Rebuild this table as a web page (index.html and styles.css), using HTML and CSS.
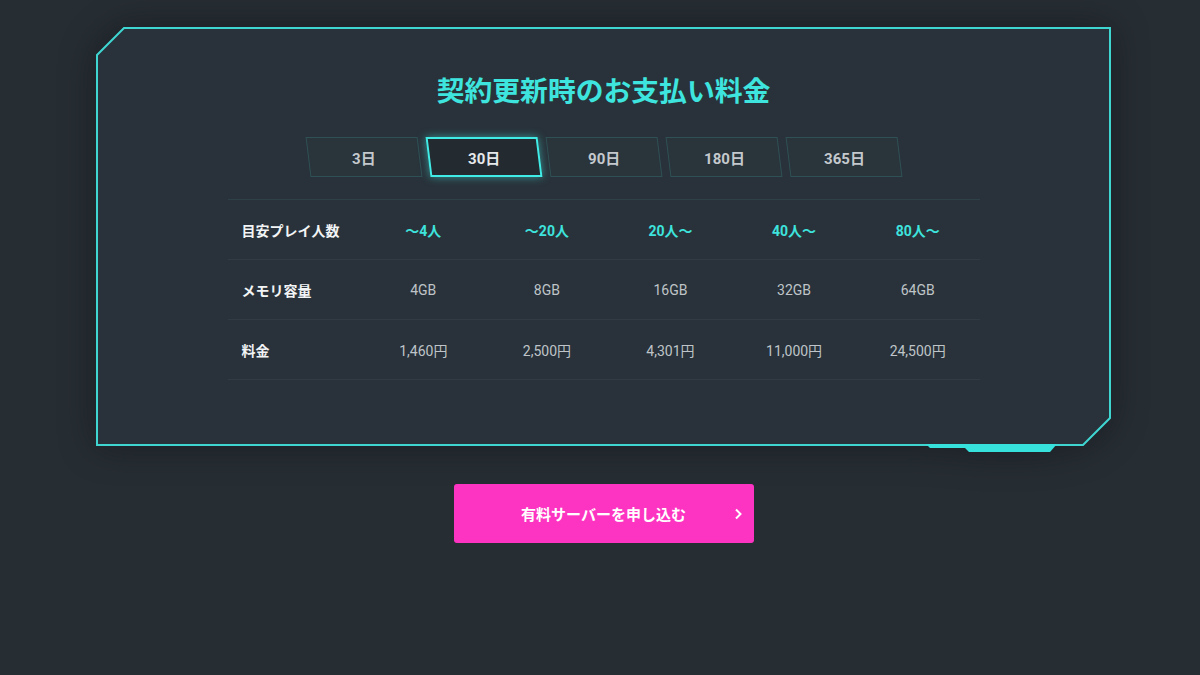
FILE: index.html
```html
<!DOCTYPE html>
<html lang="ja">

<head>
    <meta charset="UTF-8">
    <meta name="viewport" content="width=device-width, initial-scale=1.0">
    <title>料金プラン</title>
    <link rel="stylesheet" href="styles.css">
</head>

<body>
    <div class="section">
        <div class="panel">
            <!-- 枠線（角の切り欠きと下のタブ） -->
            <svg class="frame" width="1015" height="419" viewBox="0 0 1015 419">
                <polygon class="frame_fill" points="1,28 28,1 1014,1 1014,391 987,418 1,418" />
                <polygon class="frame_tab" points="830,417 961,417 954,425 873,425 869,421 834,421" />
            </svg>

            <div class="inner">
                <h2 class="title">契約更新時のお支払い料金</h2>

                <ul class="tabs">
                    <li class="tab"><span>3日</span></li>
                    <li class="tab active"><span>30日</span></li>
                    <li class="tab"><span>90日</span></li>
                    <li class="tab"><span>180日</span></li>
                    <li class="tab"><span>365日</span></li>
                </ul>

                <table class="price">
                    <colgroup>
                        <col class="col_label">
                        <col><col><col><col><col>
                    </colgroup>
                    <tr class="players">
                        <th>目安プレイ人数</th>
                        <td>～4人</td>
                        <td>～20人</td>
                        <td>20人～</td>
                        <td>40人～</td>
                        <td>80人～</td>
                    </tr>
                    <tr>
                        <th>メモリ容量</th>
                        <td>4GB</td>
                        <td>8GB</td>
                        <td>16GB</td>
                        <td>32GB</td>
                        <td>64GB</td>
                    </tr>
                    <tr>
                        <th>料金</th>
                        <td>1,460円</td>
                        <td>2,500円</td>
                        <td>4,301円</td>
                        <td>11,000円</td>
                        <td>24,500円</td>
                    </tr>
                </table>
            </div>
        </div>

        <a class="btn" href="#">
            有料サーバーを申し込む
            <svg class="arrow" width="8" height="12" viewBox="0 0 8 12">
                <path d="M2 1.5 L6.5 6 L2 10.5" />
            </svg>
        </a>
    </div>
</body>

</html>
```

FILE: styles.css
```css
body {
    margin: 0;
    padding: 0;
    background-color: #262d33;
    font-family: Roboto, "Noto Sans CJK JP", sans-serif;
    color: #fff;
}

.section {
    width: 1015px;
    margin: 0 auto;
    padding: 27px 0 0 7px;
}

.panel {
    position: relative;
    width: 1015px;
    height: 419px;
}

.frame {
    position: absolute;
    top: 0;
    left: 0;
    overflow: visible;
    filter: drop-shadow(0 0 18px rgba(0, 0, 0, 0.35));
}

.frame_fill {
    fill: #29323a;
    stroke: #3fd6d2;
    stroke-width: 2;
}

.frame_tab {
    fill: #37e2dd;
}

.inner {
    position: relative;
    padding: 0 131px;
    display: flex;
    flex-direction: column;
    align-items: center;
}

.title {
    margin: 46px 0 0;
    font-size: 27.8px;
    line-height: 38px;
    font-weight: 700;
    color: #3ee5df;
}

.tabs {
    list-style: none;
    margin: 26px 0 0;
    padding: 0;
    display: flex;
    gap: 8px;
}

.tab {
    width: 112px;
    height: 40px;
    box-sizing: border-box;
    border: 1px solid #2f5156;
    background-color: #29343b;
    transform: skewX(7deg);
    display: flex;
    align-items: center;
    justify-content: center;
    font-size: 15px;
    font-weight: 700;
    color: #c4c9cd;
}

.tab span {
    transform: skewX(-7deg);
}

.tab.active {
    border: 2px solid #42ece6;
    background-color: #232b31;
    color: #e6e9eb;
    box-shadow: 0 0 8px rgba(62, 227, 221, 0.55);
}

.price {
    width: 752px;
    margin-top: 22px;
    table-layout: fixed;
    border-collapse: collapse;
    border-top: 1px solid #2f4148;
    font-size: 14px;
}

.col_label {
    width: 134px;
}

.price tr {
    height: 60px;
    border-bottom: 1px solid #303b43;
}

.price th {
    padding: 0 0 0 14px;
    text-align: left;
    font-weight: 700;
    color: #f2f4f5;
}

.price td {
    text-align: center;
    color: #bfc4c8;
}

.players td {
    color: #3ee3dd;
    font-weight: 700;
}

.btn {
    position: relative;
    display: flex;
    align-items: center;
    justify-content: center;
    width: 300px;
    height: 59px;
    margin: 38px auto 0;
    background-color: #fd33c1;
    border-radius: 3px;
    color: #fff;
    font-size: 15px;
    font-weight: 700;
    text-decoration: none;
}

.arrow {
    position: absolute;
    right: 12px;
    top: 24px;
    fill: none;
    stroke: #fff;
    stroke-width: 2;
}
```
